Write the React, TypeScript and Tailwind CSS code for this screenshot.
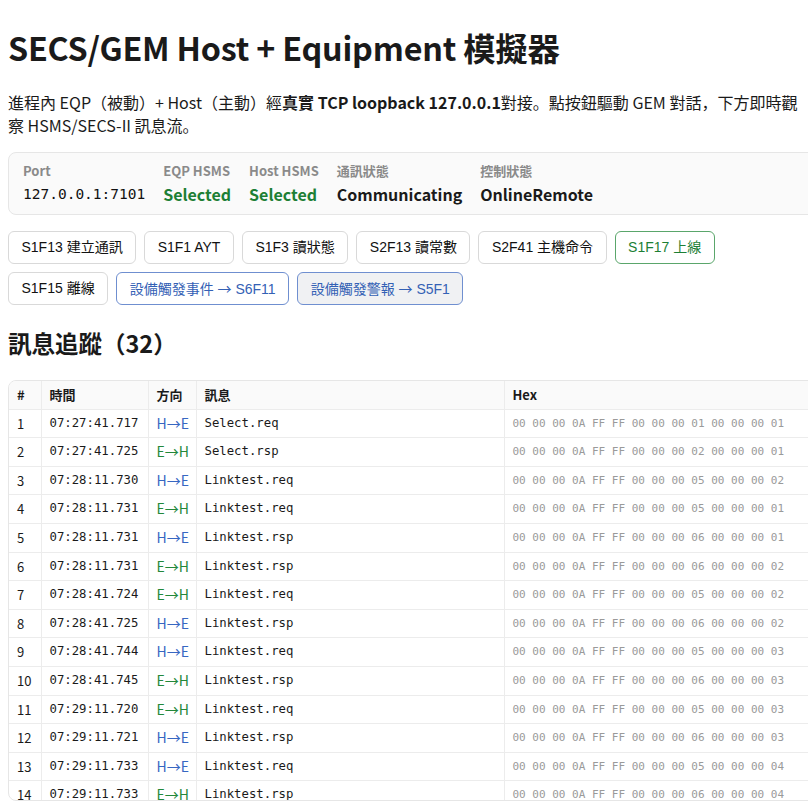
import { useState } from 'react';

type Dir = 'H→E' | 'E→H';

interface TraceRow {
  time: string;
  dir: Dir;
  msg: string;
  hex: string;
}

const hdr = (stype: string, sys: string) => `00 00 00 0A FF FF 00 00 00 ${stype} 00 00 00 ${sys}`;

const rows: TraceRow[] = [
  { time: '07:27:41.717', dir: 'H→E', msg: 'Select.req', hex: hdr('01', '01') },
  { time: '07:27:41.725', dir: 'E→H', msg: 'Select.rsp', hex: hdr('02', '01') },
  { time: '07:28:11.730', dir: 'H→E', msg: 'Linktest.req', hex: hdr('05', '02') },
  { time: '07:28:11.731', dir: 'E→H', msg: 'Linktest.req', hex: hdr('05', '01') },
  { time: '07:28:11.731', dir: 'H→E', msg: 'Linktest.rsp', hex: hdr('06', '01') },
  { time: '07:28:11.731', dir: 'E→H', msg: 'Linktest.rsp', hex: hdr('06', '02') },
  { time: '07:28:41.724', dir: 'E→H', msg: 'Linktest.req', hex: hdr('05', '02') },
  { time: '07:28:41.725', dir: 'H→E', msg: 'Linktest.rsp', hex: hdr('06', '02') },
  { time: '07:28:41.744', dir: 'H→E', msg: 'Linktest.req', hex: hdr('05', '03') },
  { time: '07:28:41.745', dir: 'E→H', msg: 'Linktest.rsp', hex: hdr('06', '03') },
  { time: '07:29:11.720', dir: 'E→H', msg: 'Linktest.req', hex: hdr('05', '03') },
  { time: '07:29:11.721', dir: 'H→E', msg: 'Linktest.rsp', hex: hdr('06', '03') },
  { time: '07:29:11.733', dir: 'H→E', msg: 'Linktest.req', hex: hdr('05', '04') },
  { time: '07:29:11.733', dir: 'E→H', msg: 'Linktest.rsp', hex: hdr('06', '04') },
  { time: '07:29:41.718', dir: 'E→H', msg: 'Linktest.req', hex: hdr('05', '04') },
  { time: '07:29:41.719', dir: 'H→E', msg: 'Linktest.rsp', hex: hdr('06', '04') },
  { time: '07:29:41.735', dir: 'H→E', msg: 'Linktest.req', hex: hdr('05', '05') },
  { time: '07:29:41.736', dir: 'E→H', msg: 'Linktest.rsp', hex: hdr('06', '05') },
  { time: '07:30:02.114', dir: 'H→E', msg: 'S1F13 W', hex: '00 00 00 0C 00 00 81 0D 00 00 00 00 00 06 01 00' },
  { time: '07:30:02.118', dir: 'E→H', msg: 'S1F14', hex: '00 00 00 12 00 00 01 0E 00 00 00 00 00 06 01 02' },
  { time: '07:30:05.402', dir: 'H→E', msg: 'S1F1 W', hex: '00 00 00 0A 00 00 81 01 00 00 00 00 00 07' },
  { time: '07:30:05.405', dir: 'E→H', msg: 'S1F2', hex: '00 00 00 1A 00 00 01 02 00 00 00 00 00 07 01 02' },
  { time: '07:30:08.611', dir: 'H→E', msg: 'S1F3 W', hex: '00 00 00 0C 00 00 81 03 00 00 00 00 00 08 01 00' },
  { time: '07:30:08.615', dir: 'E→H', msg: 'S1F4', hex: '00 00 00 20 00 00 01 04 00 00 00 00 00 08 01 03' },
  { time: '07:30:11.720', dir: 'E→H', msg: 'Linktest.req', hex: hdr('05', '06') },
  { time: '07:30:11.721', dir: 'H→E', msg: 'Linktest.rsp', hex: hdr('06', '06') },
  { time: '07:30:14.930', dir: 'H→E', msg: 'S2F13 W', hex: '00 00 00 0C 00 00 82 0D 00 00 00 00 00 09 01 00' },
  { time: '07:30:14.934', dir: 'E→H', msg: 'S2F14', hex: '00 00 00 1C 00 00 02 0E 00 00 00 00 00 09 01 02' },
  { time: '07:30:18.207', dir: 'H→E', msg: 'S1F17 W', hex: '00 00 00 0A 00 00 81 11 00 00 00 00 00 0A' },
  { time: '07:30:18.210', dir: 'E→H', msg: 'S1F18', hex: '00 00 00 0D 00 00 01 12 00 00 00 00 00 0A 21 01 00' },
  { time: '07:30:22.503', dir: 'E→H', msg: 'S6F11 W', hex: '00 00 00 2E 00 00 86 0B 00 00 00 00 00 03 01 03' },
  { time: '07:30:22.507', dir: 'H→E', msg: 'S6F12', hex: '00 00 00 0D 00 00 06 0C 00 00 00 00 00 03 21 01 00' },
];

type Tone = 'plain' | 'green' | 'blue' | 'blueActive';

const buttons: { code: string; label: string; tone: Tone; arrow?: boolean }[] = [
  { code: 'S1F13', label: '建立通訊', tone: 'plain' },
  { code: 'S1F1', label: 'AYT', tone: 'plain' },
  { code: 'S1F3', label: '讀狀態', tone: 'plain' },
  { code: 'S2F13', label: '讀常數', tone: 'plain' },
  { code: 'S2F41', label: '主機命令', tone: 'plain' },
  { code: 'S1F17', label: '上線', tone: 'green' },
  { code: 'S1F15', label: '離線', tone: 'plain' },
  { code: 'S6F11', label: '設備觸發事件', tone: 'blue', arrow: true },
  { code: 'S5F1', label: '設備觸發警報', tone: 'blueActive', arrow: true },
];

const toneClass: Record<Tone, string> = {
  plain: 'bg-white border-[#d9d9d9] text-[#111]',
  green: 'bg-white border-[#5aa66b] text-[#1d7f35]',
  blue: 'bg-white border-[#6f8fd0] text-[#3461b5]',
  blueActive: 'bg-[#f0f1f3] border-[#6f8fd0] text-[#3461b5]',
};

export default function App() {
  const [active, setActive] = useState<number | null>(null);

  return (
    <div className="min-h-screen bg-white text-[#1a1a1a] font-['Noto_Sans_CJK_JP','Noto_Sans',sans-serif] px-2 pt-[25px] pb-4 overflow-hidden">
      <h1 className="text-[32.3px] leading-[44px] font-bold tracking-[-0.2px]">SECS/GEM Host + Equipment 模擬器</h1>

      <p className="mt-[22px] text-[16px] leading-[23px]">
        進程內 EQP（被動）+ Host（主動）經<b>真實 TCP loopback 127.0.0.1</b>對接。點按鈕驅動 GEM 對話，下方即時觀察 HSMS/SECS-II 訊息流。
      </p>

      {/* status card */}
      <div className="mt-[15px] w-[1000px] bg-[#fafafa] border border-[#e6e6e6] rounded-lg px-[14px] py-[9px] flex gap-[18px]">
        <div className="flex flex-col">
          <span className="text-[13px] leading-[18px] font-bold text-[#8a8a8a]">Port</span>
          <span className="mt-[3px] text-[14.5px] leading-[22px] font-['DejaVu_Sans_Mono',monospace] text-[#111]">127.0.0.1:7101</span>
        </div>
        <div className="flex flex-col">
          <span className="text-[13px] leading-[18px] font-bold text-[#8a8a8a]">EQP HSMS</span>
          <span className="mt-[3px] text-[16px] leading-[22px] font-bold text-[#1d7f35]">Selected</span>
        </div>
        <div className="flex flex-col">
          <span className="text-[13px] leading-[18px] font-bold text-[#8a8a8a]">Host HSMS</span>
          <span className="mt-[3px] text-[16px] leading-[22px] font-bold text-[#1d7f35]">Selected</span>
        </div>
        <div className="flex flex-col">
          <span className="text-[13px] leading-[18px] font-bold text-[#8a8a8a]">通訊狀態</span>
          <span className="mt-[3px] text-[16px] leading-[22px] font-bold text-[#1a1a1a]">Communicating</span>
        </div>
        <div className="flex flex-col">
          <span className="text-[13px] leading-[18px] font-bold text-[#8a8a8a]">控制狀態</span>
          <span className="mt-[3px] text-[16px] leading-[22px] font-bold text-[#1a1a1a]">OnlineRemote</span>
        </div>
      </div>

      {/* actions */}
      <div className="mt-4 flex flex-wrap gap-x-2 gap-y-2">
        {buttons.map((b, i) => (
          <button
            key={b.code}
            onClick={() => setActive(i)}
            className={`h-[33px] px-[12.5px] rounded-md border text-[14px] font-['Liberation_Sans','Noto_Sans_CJK_JP',sans-serif] ${toneClass[b.tone]} ${active === i ? 'ring-1 ring-[#6f8fd0]' : ''}`}
          >
            {b.arrow ? (
              <>
                {b.label} <span className="font-['Noto_Sans_CJK_JP',sans-serif]">→</span> {b.code}
              </>
            ) : (
              <>
                {b.code} {b.label}
              </>
            )}
          </button>
        ))}
      </div>

      <h2 className="mt-[22px] text-[23.5px] leading-[32px] font-bold">訊息追蹤（32）</h2>

      {/* trace table */}
      <div className="mt-[21px] w-[1000px] max-h-[421px] overflow-hidden border border-[#e6e6e6] rounded-lg">
        <table className="w-full table-fixed border-collapse text-[13px] leading-[19.6px]">
          <colgroup>
            <col className="w-[32px]" />
            <col className="w-[107px]" />
            <col className="w-[48px]" />
            <col className="w-[308px]" />
            <col />
          </colgroup>
          <thead className="bg-[#fafafa]">
            <tr className="text-left">
              <th className="px-2 py-1 font-bold border-b border-[#ececec]">#</th>
              <th className="px-2 py-1 font-bold border-b border-l border-[#ececec]">時間</th>
              <th className="px-2 py-1 font-bold border-b border-l border-[#ececec]">方向</th>
              <th className="px-2 py-1 font-bold border-b border-l border-[#ececec]">訊息</th>
              <th className="px-2 py-1 font-bold border-b border-l border-[#ececec]">Hex</th>
            </tr>
          </thead>
          <tbody>
            {rows.map((r, i) => (
              <tr key={i}>
                <td className="px-2 py-1 border-b border-[#ececec]">{i + 1}</td>
                <td className="px-2 py-1 border-b border-l border-[#ececec] font-['DejaVu_Sans_Mono',monospace] text-[12.3px] whitespace-nowrap">{r.time}</td>
                <td className={`px-2 py-1 border-b border-l border-[#ececec] text-[14px] whitespace-nowrap ${r.dir === 'H→E' ? 'text-[#3767c2]' : 'text-[#23883a]'}`}>{r.dir}</td>
                <td className="px-2 py-1 border-b border-l border-[#ececec] font-['DejaVu_Sans_Mono',monospace] text-[12.3px]">{r.msg}</td>
                <td className="px-2 py-1 border-b border-l border-[#ececec] font-['DejaVu_Sans_Mono',monospace] text-[11px] text-[#9a9a9a] whitespace-nowrap">{r.hex}</td>
              </tr>
            ))}
          </tbody>
        </table>
      </div>
    </div>
  );
}
